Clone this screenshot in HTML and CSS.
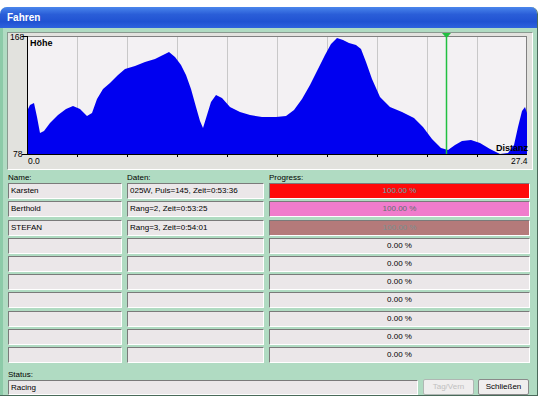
FILE: index.html
```html
<!DOCTYPE html>
<html>
<head>
<meta charset="utf-8">
<link rel="stylesheet" href="styles.css">
</head>
<body>
<div class="window">
  <div class="titlebar">Fahren</div>
  <div class="content">
    <div class="chart">
      <svg width="526" height="138" viewBox="7 33 526 138" xmlns="http://www.w3.org/2000/svg">
        <rect x="27" y="37" width="500" height="118" fill="#f3f1f3"/>
        <g stroke="#c8c8c8" stroke-width="1">
          <line x1="77.5" y1="37" x2="77.5" y2="155"/>
          <line x1="127.5" y1="37" x2="127.5" y2="155"/>
          <line x1="177.5" y1="37" x2="177.5" y2="155"/>
          <line x1="227.5" y1="37" x2="227.5" y2="155"/>
          <line x1="277.5" y1="37" x2="277.5" y2="155"/>
          <line x1="327.5" y1="37" x2="327.5" y2="155"/>
          <line x1="377.5" y1="37" x2="377.5" y2="155"/>
          <line x1="427.5" y1="37" x2="427.5" y2="155"/>
          <line x1="477.5" y1="37" x2="477.5" y2="155"/>
        </g>
        <line x1="27" y1="37.5" x2="527" y2="37.5" stroke="#808080"/>
        <line x1="526.5" y1="37" x2="526.5" y2="155" stroke="#808080"/>
        <path fill="#0000f0" d="M27 155 L27 112 L30 106 L34 104 L37 118 L40 134 L44 132 L50 124 L58 116 L66 110 L73 107 L80 110 L87 117 L92 114 L97 100 L103 90 L110 84 L118 76 L125 70 L135 67 L145 63 L155 60 L163 56 L169 53 L175 58 L181 66 L186 76 L191 90 L196 108 L200 122 L203 129 L207 116 L211 103 L216 96 L222 99 L230 108 L240 113 L250 116 L262 118 L276 118 L286 117 L294 111 L302 100 L310 86 L318 70 L325 56 L331 45 L337 39 L343 41 L349 44 L356 46 L361 50 L366 63 L372 80 L380 98 L390 108 L402 113 L414 119 L423 128 L432 140 L441 149 L448 151 L455 146 L462 142 L471 141 L480 144 L490 150 L500 155 L508 154 L514 146 L518 128 L522 112 L525 108 L527 114 L527 155 Z"/>
        <line x1="446.5" y1="36" x2="446.5" y2="155" stroke="#20c040" stroke-width="1.5"/>
        <polygon points="442,34 451,34 446.5,39" fill="#20c040"/>
        <line x1="27.5" y1="37" x2="27.5" y2="156" stroke="#000"/>
        <line x1="22" y1="155.5" x2="527" y2="155.5" stroke="#000"/>
        <line x1="22" y1="37.5" x2="27" y2="37.5" stroke="#000"/>
        <g stroke="#000">
          <line x1="77.5" y1="155" x2="77.5" y2="158"/>
          <line x1="127.5" y1="155" x2="127.5" y2="158"/>
          <line x1="177.5" y1="155" x2="177.5" y2="158"/>
          <line x1="227.5" y1="155" x2="227.5" y2="158"/>
          <line x1="277.5" y1="155" x2="277.5" y2="158"/>
          <line x1="327.5" y1="155" x2="327.5" y2="158"/>
          <line x1="377.5" y1="155" x2="377.5" y2="158"/>
          <line x1="427.5" y1="155" x2="427.5" y2="158"/>
          <line x1="477.5" y1="155" x2="477.5" y2="158"/>
        </g>
        <text x="10" y="41" class="ax">168</text>
        <text x="13" y="158" class="ax">78</text>
        <text x="28" y="165" class="ax">0.0</text>
        <text x="511" y="165" class="ax">27.4</text>
        <text x="30" y="47" class="axb">Höhe</text>
        <text x="496" y="152" class="axb">Distanz</text>
      </svg>
    </div>

    <div class="table">
      <div class="lbl">Name:</div><div class="lbl">Daten:</div><div class="lbl">Progress:</div>

      <div class="field">Karsten</div><div class="field">025W, Puls=145, Zeit=0:53:36</div><div class="field bar red">100.00 %</div>
      <div class="field">Berthold</div><div class="field">Rang=2, Zeit=0:53:25</div><div class="field bar pink">100.00 %</div>
      <div class="field">STEFAN</div><div class="field">Rang=3, Zeit=0:54:01</div><div class="field bar brown">100.00 %</div>
      <div class="field"></div><div class="field"></div><div class="field bar">0.00 %</div>
      <div class="field"></div><div class="field"></div><div class="field bar">0.00 %</div>
      <div class="field"></div><div class="field"></div><div class="field bar">0.00 %</div>
      <div class="field"></div><div class="field"></div><div class="field bar">0.00 %</div>
      <div class="field"></div><div class="field"></div><div class="field bar">0.00 %</div>
      <div class="field"></div><div class="field"></div><div class="field bar">0.00 %</div>
      <div class="field"></div><div class="field"></div><div class="field bar">0.00 %</div>
    </div>

    <div class="lbl status-lbl">Status:</div>
    <div class="bottom">
      <div class="field status">Racing</div>
      <div class="btn disabled">Tag/Vern</div>
      <div class="btn">Schließen</div>
    </div>
  </div>
</div>
</body>
</html>
```

FILE: styles.css
```css
html, body {
  margin: 0;
  padding: 0;
  background: #ffffff;
  font-family: "Liberation Sans", Arial, sans-serif;
}
.window {
  margin-top: 7px;
  width: 538px;
  height: 389px;
  border-radius: 7px 7px 0 0;
  background: #b0dbc2;
  border-right: 1px solid #4a6a5a;
  border-bottom: 1px solid #4a6a5a;
  box-sizing: border-box;
  overflow: hidden;
}
.titlebar {
  height: 21px;
  background: linear-gradient(#4a86ec, #2a5ed8 35%, #2052d2 70%, #2e62de);
  color: #ffffff;
  font-weight: bold;
  font-size: 10px;
  line-height: 21px;
  padding-left: 7px;
}
.content {
  padding: 4px 0 0 4px;
  border-left: 3px solid #8ccaa8;
}
.chart {
  width: 524px;
  height: 136px;
  border: 1px solid #ffffff;
  border-top-color: #8a9a90;
  border-left-color: #8a9a90;
  background: #e2e2de;
  overflow: hidden;
}
.chart svg {
  display: block;
  margin: -1px 0 0 -1px;
}
.ax {
  font-family: "Liberation Sans", Arial, sans-serif;
  font-size: 8.5px;
  fill: #000;
}
.axb {
  font-family: "Liberation Sans", Arial, sans-serif;
  font-size: 9px;
  font-weight: bold;
  fill: #000;
}
.table {
  display: grid;
  grid-template-columns: 114px 137px 261px;
  column-gap: 5px;
  row-gap: 2.2px;
  margin-top: 3px;
  margin-left: 1px;
}
.lbl {
  font-size: 8px;
  line-height: 9px;
  height: 9px;
  color: #000;
  margin-bottom: -1px;
}
.field {
  height: 16px;
  box-sizing: border-box;
  background: #ebe7e9;
  border: 1px solid #ffffff;
  border-top-color: #7a7a7a;
  border-left-color: #7a7a7a;
  font-size: 8px;
  line-height: 14px;
  padding-left: 2px;
  color: #000;
  white-space: nowrap;
  overflow: hidden;
}
.bar {
  text-align: center;
  padding-left: 0;
}
.bar.red {
  background: #ff0a0a;
  color: #5aaab0;
}
.bar.pink {
  background: #f07ccc;
  color: #607070;
}
.bar.brown {
  background: #b47a7a;
  color: #7a9090;
}
.status-lbl {
  margin-top: 7px;
  margin-left: 1px;
}
.bottom {
  display: flex;
  margin-left: 1px;
  margin-top: 1px;
  align-items: flex-start;
}
.status {
  width: 410px;
  height: 15px;
  margin-top: 1px;
}
.btn {
  width: 51px;
  height: 16px;
  box-sizing: border-box;
  margin-left: 5px;
  background: #f0eeee;
  border: 1px solid #8a8a8a;
  border-radius: 2px;
  font-size: 8px;
  line-height: 14px;
  text-align: center;
  color: #000;
}
.btn.disabled {
  color: #c0c0c0;
  border-color: #b0b8b4;
}
.btn + .btn {
  margin-left: 4px;
}
```
